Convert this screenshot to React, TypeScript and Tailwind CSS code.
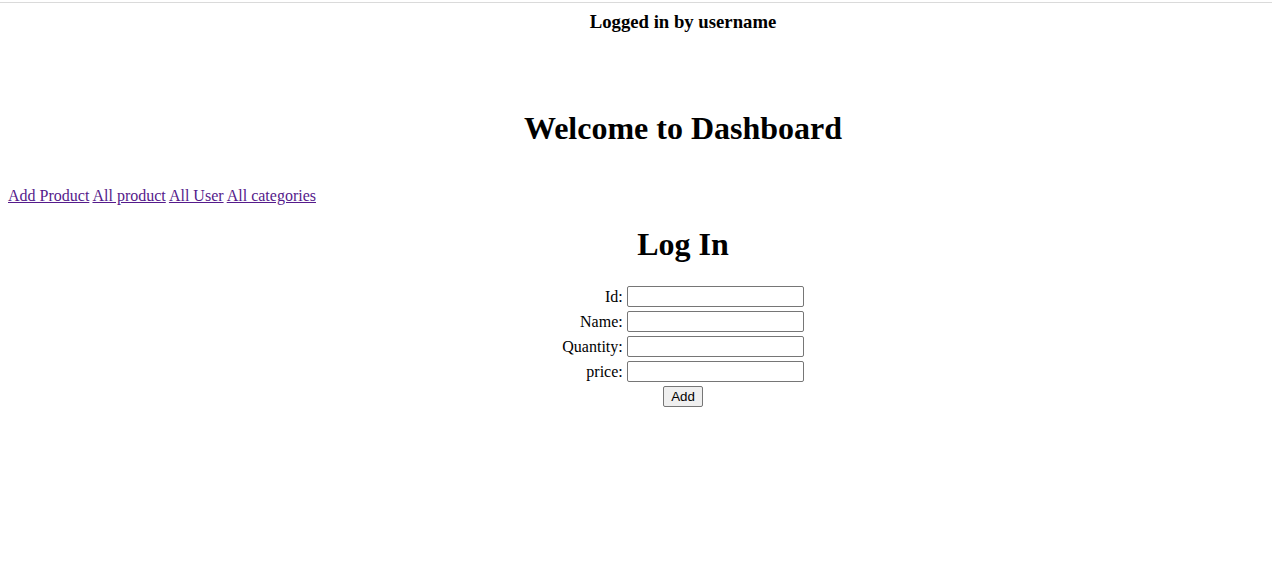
import React from "react";

export default function App() {
  const fields = ["Id:", "Name:", "Quantity:", "price:"];
  return (
    <div className="min-h-[564px] bg-white text-black font-['Liberation_Serif',serif] text-[16px] leading-[normal]">
      <div className="pt-[2px]">
        <div className="h-px bg-[#dadada]" />
      </div>
      <div className="pl-[94px] text-center">
        <h3 className="mt-[8px] text-[18.72px] font-bold leading-[normal]">Logged in by username</h3>
        <h1 className="mt-[77px] text-[32px] font-bold leading-[normal]">Welcome to Dashboard</h1>
      </div>
      <nav className="mt-[40px] px-[8px] leading-[normal]">
        <a href="#" className="text-[#551a8b] underline">Add Product</a>{" "}
        <a href="#" className="text-[#551a8b] underline">All product</a>{" "}
        <a href="#" className="text-[#551a8b] underline">All User</a>{" "}
        <a href="#" className="text-[#551a8b] underline">All categories</a>
      </nav>
      <div className="pl-[94px] flex flex-col items-center">
        <h1 className="mt-[21px] text-[32px] font-bold leading-[normal]">Log In</h1>
        <form className="mt-[23px] grid grid-cols-[auto_auto] gap-x-[4px] gap-y-[4px] items-center">
          {fields.map((f) => (
            <React.Fragment key={f}>
              <label className="text-right leading-[normal]">{f}</label>
              <input
                type="text"
                className="w-[177px] h-[21px] border border-[#767676] rounded-[2px] bg-white px-[2px] text-[13.33px] font-['Liberation_Sans',sans-serif] outline-none"
              />
            </React.Fragment>
          ))}
          <div className="col-span-2 flex justify-center">
            <button
              type="button"
              className="w-[40px] h-[21px] border border-[#767676] rounded-[2px] bg-[#efefef] text-[13.33px] font-['Liberation_Sans',sans-serif] leading-none text-black"
            >
              Add
            </button>
          </div>
        </form>
      </div>
    </div>
  );
}
